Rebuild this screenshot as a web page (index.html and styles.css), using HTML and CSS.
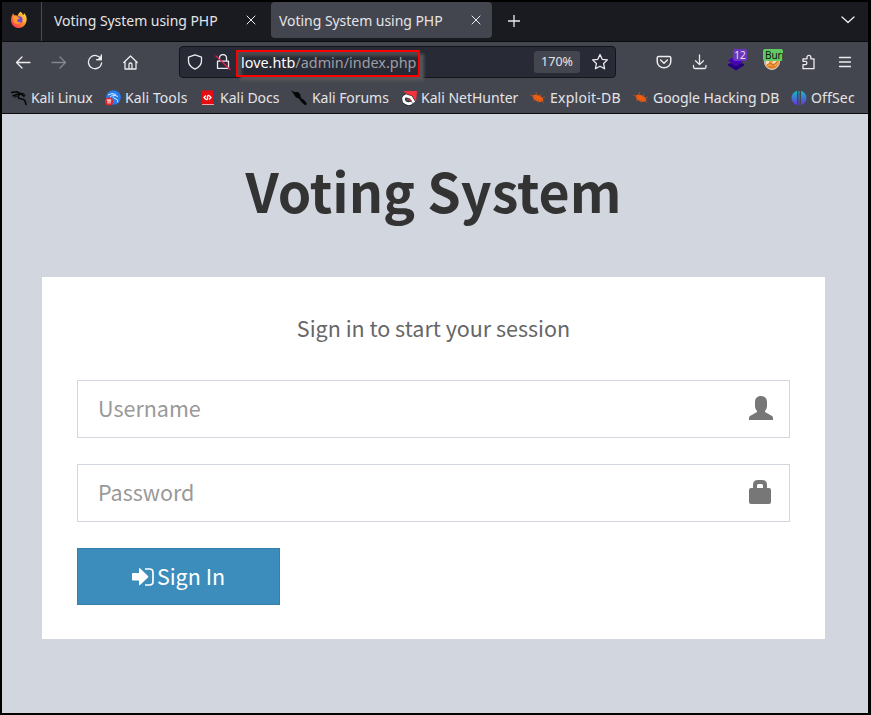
FILE: index.html
```html
<!DOCTYPE html>
<html lang="en">
<head>
<meta charset="utf-8">
<title>Voting System using PHP</title>
<link rel="stylesheet" href="styles.css">
</head>
<body>
<div class="window">
  <header class="chrome">
    <div class="tabs">
      <div class="pinned">
        <svg width="18" height="18" viewBox="0 0 18 18"><defs><linearGradient id="fox" x1="1" y1="0" x2="0" y2="1"><stop offset="0" stop-color="#fff14a"/><stop offset=".45" stop-color="#ff9128"/><stop offset="1" stop-color="#fa1d62"/></linearGradient></defs><path fill="url(#fox)" d="M10.500 .8c1.400 1 2.200 2 2.400 3.200 1-.4 1-1.200 1-2C16 3.800 17 6.500 16.600 9.500 16 14 12.700 17 8.900 17 4.500 17 1 13.600 1 9.200 1 6 2.300 4.500 3 2.300c.6.8.9 1.200 1.100 2.100C5.500 4 6.700 4.300 7.500 5 8.300 3.100 9 1.800 10.500 .8Z"/><circle cx="9" cy="8.800" r="3.500" fill="#7543d8"/><path fill="#ff9a2b" d="M2.600 5.500c2-1.300 4-.8 5.300.8l2 .5c-.5 1.200-2 1.300-2.600 2.200-.6 1.600.9 2.700 3.400 1.700-1.300 2.800-5.200 2.800-7 .5Z"/><path fill="#ffbd38" d="M11.300 4c2.200 1.500 3 4 1.800 7.100l2.800-1.200c0-3-1.600-5.400-4.600-5.900Z"/></svg>
      </div>
      <div class="tab">
        <span class="tab-label">Voting System using PHP</span>
        <svg class="close" width="10" height="10" viewBox="0 0 10 10"><path d="M1 1l8 8M9 1L1 9"/></svg>
      </div>
      <div class="tab active">
        <span class="tab-label">Voting System using PHP</span>
        <svg class="close" width="10" height="10" viewBox="0 0 10 10"><path d="M1 1l8 8M9 1L1 9"/></svg>
      </div>
      <svg class="plus" width="12" height="12" viewBox="0 0 12 12"><path d="M6 0v12M0 6h12"/></svg>
      <svg class="all-tabs" width="14" height="8" viewBox="0 0 14 8"><path d="M1 1l6 5.500L13 1"/></svg>
    </div>
    <div class="toolbar">
      <div class="nav">
        <svg width="16" height="16" viewBox="0 0 16 16"><path d="M15 8.500H1.500M7 3L1.500 8.500 7 14"/></svg>
        <svg class="dim" width="16" height="16" viewBox="0 0 16 16"><path d="M1 8.500h13.500M9 3L14.500 8.500 9 14"/></svg>
        <svg width="16" height="16" viewBox="0 0 16 16"><path d="M14 5.200A6.600 6.600 0 1 0 14.600 9M14.300 1v4.700H9.600"/><path class="fill" d="M14.800 1v5.200H9.600z"/></svg>
        <svg width="16" height="16" viewBox="0 0 16 16"><path d="M.8 8.500L7.500 2l6.700 6.500M2 7.500V15h11V7.500M6 15v-4.500a1.500 1.500 0 0 1 3 0V15"/></svg>
      </div>
      <div class="urlbar">
        <svg width="16" height="16" viewBox="0 0 16 16"><path d="M8 .9l6.500 2.300V7c0 3.500-2.600 6.300-6.500 8.200C4.100 13.300 1.500 10.500 1.500 7V3.200Z"/></svg>
        <svg class="insecure" width="16" height="16" viewBox="0 0 16 16"><path d="M4.500 7V4a3.500 3.500 0 0 1 7 0v3M2.500 7.200h11v7.200h-11z"/><path class="slash" d="M1 2l14 13.500"/></svg>
        <div class="address"><span class="host">love.htb</span>/admin/index.php</div>
        <span class="zoom">170%</span>
        <svg class="star" width="18" height="18" viewBox="0 0 18 18"><path d="M9 1.500l2.200 4.800 5.200.6-3.800 3.600 1 5.300L9 13.200l-4.600 2.600 1-5.300L1.600 6.900l5.200-.6Z"/></svg>
      </div>
      <div class="actions">
        <svg width="16" height="16" viewBox="0 0 16 16"><path d="M2.800 2.500h10.400q1.600 0 1.600 1.600v3.400a6.800 6.300 0 0 1-13.600 0V4.100q0-1.600 1.600-1.600ZM4.600 6L8 9.200 11.400 6" stroke-width="1.500"/></svg>
        <svg width="16" height="16" viewBox="0 0 16 16"><path d="M7.500 1v9.500M3.500 6.800l4 3.800 4-3.800M1.500 11.500v1.600q0 1.400 1.400 1.400h9.700q1.400 0 1.400-1.400v-1.600"/></svg>
        <div class="ext">
          <svg width="18" height="18" viewBox="0 0 18 18"><path fill="#270083" stroke="none" d="M1 11l3-1 5 3 5-3 3 1v1.500l-8 5-8-5z"/><path fill="#4800b6" stroke="none" d="M9 2.500l8 5L9 13 1 7.500z"/></svg>
          <span class="badge purple">12</span>
        </div>
        <div class="ext">
          <svg width="18" height="18" viewBox="0 0 18 18"><circle cx="9" cy="9" r="7.500" fill="#f39a3c" stroke="#c9cbd0"/><path fill="#f9dfb9" stroke="none" d="M3 7h3v4l-3 1zM11 7h3l-2 4-3-1z"/><path stroke="#c0691c" stroke-width="1" d="M4 12l3-2 3 2 4-3M6 14h6"/></svg>
          <span class="badge green">Burp</span>
        </div>
        <svg class="puzzle" width="16" height="16" viewBox="0 0 16 16"><path d="M2 14.700v-4h2.200a1.700 1.700 0 0 0 0-3.400H2V4.800h4V3.200a1.900 1.900 0 0 1 3.800 0v1.600H13v9.900Z"/></svg>
        <svg class="menu" width="14" height="12" viewBox="0 0 14 12"><path d="M1.500 1.500h11M1.500 6h11M1.500 10.500h11"/></svg>
      </div>
    </div>
    <nav class="bookmarks">
      <a class="bm b1"><svg width="16" height="16" viewBox="0 0 16 16"><path fill="none" stroke="#050506" stroke-width="1.500" d="M0 2.500l6-.7 4 2M1.500 6l5-1.800 4 0 3 2.500M9.500 3.500q-4 3.500-1 5 4.500.5 5.500 2.500l1.200 4"/><path fill="none" stroke="#050506" d="M10 3l3 1 1 2M3 7.500l3-1.500"/></svg>Kali Linux</a>
      <a class="bm b2"><svg width="16" height="16" viewBox="0 0 16 16"><circle cx="8.500" cy="7.500" r="7.300" fill="#267bed"/><path d="M3 5l4-1.500 4 1M5 7q3-3 5-1.500l3 1M9 5q-2 3 1 3.500 3 .5 3 4" fill="none" stroke="#d9eaff" stroke-width="1"/><circle cx="4" cy="11.500" r="4" fill="#e7252b"/><path d="M1.800 10h4.400M3.100 10v3.500M5 10v3.500" stroke="#fff"/></svg>Kali Tools</a>
      <a class="bm b3"><svg width="14" height="16" viewBox="0 0 14 16"><path fill="#e60c10" d="M1 .5h11V14H1z"/><path fill="#1c4b91" d="M12 .5h1.500V14H12z"/><path fill="#f2a5a5" d="M1 14h12v1H1z"/><path d="M5 5.500L3 7.500l2 2q1 .5 1.500-.7V6.500q.5-1.500 1.500-1l2 2-2 2" fill="none" stroke="#fff" stroke-width="1.300"/></svg>Kali Docs</a>
      <a class="bm b4"><svg width="17" height="16" viewBox="0 0 17 16"><path fill="#050506" d="M0 0l3 2h4l2 2 1 4 3 2 3 3.500-1 .5 1 1.500-3-1-3-3-2-3-3-1-2-3z"/></svg>Kali Forums</a>
      <a class="bm b5"><svg width="16" height="16" viewBox="0 0 16 16"><path fill="#f3323e" d="M2 1h14l-1 11-4-6-5-2z"/><path fill="none" stroke="#17171a" stroke-width="3.800" d="M11 12.800Q7 15 3.500 12 1 7 5 5.800l5 1.700 3 5"/><path fill="none" stroke="#fff" stroke-width="2.800" d="M11 12.800Q7 15 3.500 12 1 7 5 5.800l5 1.700 3 5"/><path fill="none" stroke="#f3323e" d="M6 10.500q1-2 3-.5l2 1"/></svg>Kali NetHunter</a>
      <a class="bm b6"><svg width="16" height="16" viewBox="0 0 16 16"><path fill="#ef5c12" d="M2.500 5.500l3-1 4 1 3 2.500 1 2.500-3 1.500-4-1-3-2z"/><path fill="none" stroke="#bd571f" stroke-width=".7" d="M0 5l5 2M6 2l1 4M11 4l-1 3M3 11l4-2M8 13l1-4M15 7l-4 1M14 13l-3-3"/></svg>Exploit-DB</a>
      <a class="bm b7"><svg width="16" height="16" viewBox="0 0 16 16"><path fill="#ef5c12" d="M2.500 5.500l3-1 4 1 3 2.500 1 2.500-3 1.500-4-1-3-2z"/><path fill="none" stroke="#bd571f" stroke-width=".7" d="M0 5l5 2M6 2l1 4M11 4l-1 3M3 11l4-2M8 13l1-4M15 7l-4 1M14 13l-3-3"/></svg>Google Hacking DB</a>
      <a class="bm b8"><svg width="16" height="16" viewBox="0 0 16 16"><defs><linearGradient id="off" gradientUnits="userSpaceOnUse" x1="0" y1="0" x2="0" y2="16"><stop offset=".1" stop-color="#16b5c7"/><stop offset=".9" stop-color="#6638d8"/></linearGradient></defs><path fill="url(#off)" d="M6 .8v14.400Q.5 13 .5 8T6 .8zM10 .8v14.400q5.500-2.200 5.500-7.200T10 .8zM7.500 1h1v14h-1z"/></svg>OffSec</a>
    </nav>
  </header>
  <main class="page">
    <h1>Voting System</h1>
    <form class="card">
      <p class="message">Sign in to start your session</p>
      <div class="field"><span>Username</span>
        <svg width="24" height="24" viewBox="0 0 24 24"><path d="M12 0c4 0 6 2.500 6 6v4c0 2-1 4-2 5v1l7 4q1 .7 1 2v2H0v-2q0-1.300 1-2l7-4v-1c-1-1-2-3-2-5V6c0-3.500 2-6 6-6z"/></svg>
      </div>
      <div class="field"><span>Password</span>
        <svg width="24" height="24" viewBox="0 0 24 24"><path fill-rule="evenodd" d="M4 8V5q0-5 5-5h4q5 0 5 5v3h2q2 0 2 2v12q0 2-2 2H2q-2 0-2-2V10q0-2 2-2zM8 8h6V5.500Q14 4 12.500 4h-3Q8 4 8 5.500z"/></svg>
      </div>
      <button class="signin" type="button">
        <svg width="22" height="18" viewBox="0 0 22 18"><path fill="#fff" d="M0 6q0-1 1-1h6V1q0-1.500 1-.7l8 7.700q.7.700 0 1.400l-8 7.700q-1 .7-1-.8V12.500H1q-1 0-1-1z"/><path fill="none" stroke="#fff" stroke-width="1.700" d="M13 1h4.500Q21 1 21 4.500v9q0 3.500-3.500 3.500H13"/></svg>
        <span>Sign In</span>
      </button>
    </form>
  </main>
</div>
</body>
</html>
```
FILE: styles.css
```css
* { box-sizing: border-box; }
body { margin: 0; background: #000; font-family: "Noto Sans", sans-serif; }
svg { display: block; flex: none; }
.window { width: 871px; height: 715px; padding: 2px 3px 2px 2px; background: #000; overflow: hidden; }
.chrome { height: 112px; background: #44464f; color: #e4e4e7; font-size: 14px; border-bottom: 1px solid #0c0c0d; }
.tabs { display: flex; height: 40px; background: #1a1b20; border-bottom: 1px solid #0c0c0f; }
.pinned { width: 40px; height: 39px; padding: 9px 0 0 8px; border-right: 1px solid #4b4c53; }
.tab { width: 221px; height: 36px; display: flex; align-items: center; padding: 0 11px 0 8px; border-radius: 4px; justify-content: space-between; }
.tab:nth-child(2) { margin-left: 4px; margin-right: 4px; }
.active { background: #44464f; }
.tab-label { white-space: nowrap; letter-spacing: -0.04px; }
.close, .plus, .all-tabs, .nav svg, .urlbar svg, .actions svg { fill: none; stroke: #ececef; stroke-width: 1.3; stroke-linecap: round; stroke-linejoin: round; }
.close { stroke-width: 1; }
.plus { margin: 13px 0 0 16px; }
.all-tabs { margin: 14px 13px 0 auto; }
.toolbar { display: flex; height: 40px; align-items: center; }
.nav { display: flex; width: 177px; padding-left: 13px; gap: 20px; }
.nav .fill { fill: #ececef; stroke: none; }
.nav .dim { stroke: #85868d; }
.urlbar { display: flex; align-items: center; width: 437px; height: 32px; padding: 0 6px 0 7px; background: #282a35; border: 1px solid #14151b; border-radius: 4px; }
.urlbar .insecure { margin-left: 12px; }
.urlbar .slash { stroke: #e2214c; }
.address { flex: none; width: 184px; height: 27px; margin: 2px 0 0 5px; padding-left: 3px; border: 2px solid #f00; font-size: 14.4px; line-height: 21px; color: #9d9ea5; white-space: nowrap; box-shadow: 4px 4px 3px #55565a, inset 4px 4px 3px #4b4c51; }
.host { color: #fbfbfe; }
.zoom { width: 46px; height: 22px; margin-left: auto; border-radius: 3px; background: #44464f; font-size: 12.5px; line-height: 22px; text-align: center; }
.urlbar .star { margin-left: 11px; }
.actions { display: flex; align-items: center; margin-left: 40px; gap: 20px; }
.ext { position: relative; width: 18px; height: 18px; margin: 0 -1px; }
.actions .ext svg { stroke-width: 1; }
.actions .puzzle { margin: 0 1px; }
.badge { position: absolute; height: 12px; top: -4px; font-size: 10px; line-height: 12px; border-radius: 2px; }
.purple { left: 6px; width: 14px; text-align: center; background: #6b36bd; }
.green { left: 0; width: 20px; padding-left: 2px; overflow: hidden; background: #5fcb62; color: #111; letter-spacing: -0.1px; }
.bookmarks { display: flex; height: 31px; align-items: center; padding-left: 9px; }
.bm { display: flex; align-items: center; flex: none; gap: 4px; white-space: nowrap; }
.b1 { width: 94px; letter-spacing: -0.15px; }
.b2 { width: 96px; letter-spacing: 0.1px; }
.b3 { width: 90px; gap: 5px; }
.b4 { width: 110px; gap: 4px; letter-spacing: -0.05px; }
.b5 { width: 129px; }
.b6 { width: 103px; letter-spacing: 0.25px; }
.b7 { width: 158px; letter-spacing: -0.05px; }
.b8 { letter-spacing: 0.15px; }
.page { height: 599px; padding: 39px 43px 0 40px; background: #d2d6de; font-family: "Noto Sans CJK SC", sans-serif; }
h1 { margin: 0; height: 124px; color: #333; font-size: 53.7px; line-height: 74px; font-weight: 700; text-align: center; }
.card { height: 362px; padding: 34px 35px; background: #fff; }
.message { margin: 0; height: 69px; color: #666; font-size: 21.5px; line-height: 34px; text-align: center; }
.field { display: flex; align-items: center; justify-content: space-between; height: 58px; margin-bottom: 26px; padding: 0 16px 2px 20px; border: 1px solid #d2d6de; color: #999; font-size: 21.5px; }
.field span { margin-top: -2px; }
.field svg { fill: #777; }
.signin { display: flex; align-items: center; justify-content: center; gap: 3px; width: 203px; height: 57px; padding: 0; border: 1px solid #367fa9; background: #3c8dbc; color: #fff; font: 21.5px "Noto Sans CJK SC", sans-serif; }
.signin span { margin-top: -2px; }
```
